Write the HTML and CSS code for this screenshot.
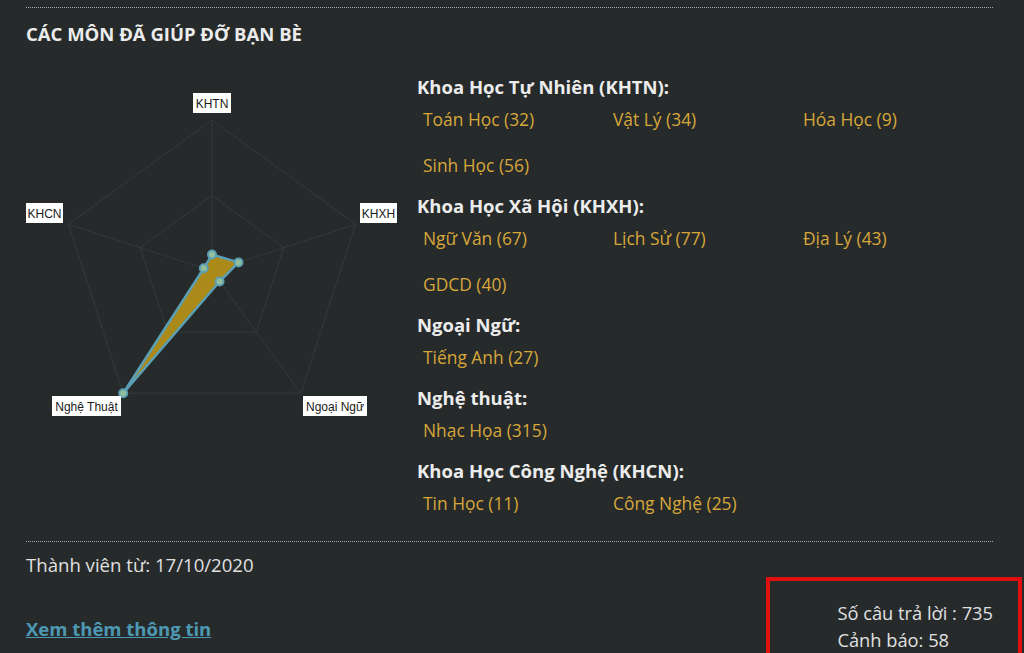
FILE: index.html
```html
<!DOCTYPE html>
<html>
<head lang="vi">
    <meta charset="UTF-8">
    <title>Các môn đã giúp đỡ bạn bè</title>
    <link rel="stylesheet" href="styles.css">
</head>
<body>
<div id="container">
    <h2 class="title">CÁC MÔN ĐÃ GIÚP ĐỠ BẠN BÈ</h2>
    <div class="subjects">
        <div class="chart">
            <svg width="372" height="360" viewBox="0 0 372 360">
                <g class="grid">
                    <polygon points="186,60 329.6,164.3 274.8,333.2 97.2,333.2 42.4,164.3"/>
                    <polygon points="186,135.5 257.8,187.7 230.4,272.1 141.6,272.1 114.2,187.7"/>
                    <line x1="186" y1="211" x2="186" y2="60"/>
                    <line x1="186" y1="211" x2="329.6" y2="164.3"/>
                    <line x1="186" y1="211" x2="274.8" y2="333.2"/>
                    <line x1="186" y1="211" x2="97.2" y2="333.2"/>
                    <line x1="186" y1="211" x2="42.4" y2="164.3"/>
                </g>
                <polygon class="area" points="186,194.5 212.5,202.4 193.6,221.5 97.2,333.2 177.8,208.3"/>
                <g class="dots">
                    <circle cx="186" cy="194.5" r="4"/>
                    <circle cx="212.5" cy="202.4" r="4"/>
                    <circle cx="193.6" cy="221.5" r="4"/>
                    <circle cx="97.2" cy="333.2" r="4"/>
                    <circle cx="177.8" cy="208.3" r="4"/>
                </g>
                <g class="labels">
                    <rect x="167" y="33" width="38" height="20"/>
                    <text x="186" y="47.5">KHTN</text>
                    <rect x="334" y="143" width="37" height="20"/>
                    <text x="352.5" y="157.5">KHXH</text>
                    <rect x="277" y="336" width="64" height="20"/>
                    <text x="309" y="350.5">Ngoại Ngữ</text>
                    <rect x="26" y="336" width="69" height="20"/>
                    <text x="60.5" y="350.5">Nghệ Thuật</text>
                    <rect x="0" y="143" width="37" height="20"/>
                    <text x="18.5" y="157.5">KHCN</text>
                </g>
            </svg>
        </div>
        <div class="groups">
            <h3>Khoa Học Tự Nhiên (KHTN):</h3>
            <ul>
                <li>Toán Học (32)</li>
                <li>Vật Lý (34)</li>
                <li>Hóa Học (9)</li>
                <li>Sinh Học (56)</li>
            </ul>
            <h3>Khoa Học Xã Hội (KHXH):</h3>
            <ul>
                <li>Ngữ Văn (67)</li>
                <li>Lịch Sử (77)</li>
                <li>Địa Lý (43)</li>
                <li>GDCD (40)</li>
            </ul>
            <h3>Ngoại Ngữ:</h3>
            <ul>
                <li>Tiếng Anh (27)</li>
            </ul>
            <h3>Nghệ thuật:</h3>
            <ul>
                <li>Nhạc Họa (315)</li>
            </ul>
            <h3>Khoa Học Công Nghệ (KHCN):</h3>
            <ul>
                <li>Tin Học (11)</li>
                <li>Công Nghệ (25)</li>
            </ul>
        </div>
    </div>
    <div class="member">Thành viên từ: 17/10/2020</div>
    <div class="footer">
        <a href="#" class="more">Xem thêm thông tin</a>
        <div class="stats">
            <p>Số câu trả lời : 735</p>
            <p>Cảnh báo: 58</p>
        </div>
    </div>
    <div class="mark"></div>
</div>
</body>
</html>
```

FILE: styles.css
```css
* {
    padding: 0;
    margin: 0;
}

ul, ol {
    list-style: none;
}

body {
    background: #262a2b;
    color: #e4e4e4;
    font-family: "Open Sans", "Noto Sans", sans-serif;
    overflow: hidden;
}

#container {
    position: relative;
    height: 653px;
    padding: 7px 31px 0 26px;
}

.title {
    border-top: 1px dotted #a8a8a8;
    padding-top: 14px;
    font-size: 18.5px;
    line-height: 24px;
    font-weight: 700;
    color: #ececec;
}

.subjects {
    display: flex;
    margin-top: 14px;
    border-bottom: 1px dotted #a8a8a8;
    padding-bottom: 10px;
}

.chart {
    width: 391px;
    flex: none;
}

.chart svg {
    display: block;
}

.grid polygon, .grid line {
    fill: none;
    stroke: #33393a;
    stroke-width: 1;
}

.area {
    fill: #ab8a19;
    stroke: #5b9fb4;
    stroke-width: 2.5;
    stroke-linejoin: round;
}

.dots circle {
    fill: #93bf9c;
    stroke: #5b9fb4;
    stroke-width: 2;
}

.labels rect {
    fill: #ffffff;
}

.labels text {
    font-family: "Liberation Sans", Arial, sans-serif;
    font-size: 12px;
    fill: #1a1a1a;
    text-anchor: middle;
}

.groups {
    flex: 1;
    padding-top: 14px;
}

.groups h3 {
    font-size: 18.5px;
    line-height: 26px;
    font-weight: 700;
    color: #ececec;
    margin-bottom: 6px;
}

.groups ul {
    display: flex;
    flex-wrap: wrap;
    row-gap: 20px;
    margin-bottom: 15px;
    padding-left: 6px;
}

.groups li {
    width: 190px;
    font-size: 17.4px;
    line-height: 26px;
    color: #d6a73a;
}

.member {
    margin-top: 11px;
    font-size: 18.6px;
    line-height: 24px;
    color: #e0e0e0;
}

.footer {
    display: flex;
    justify-content: space-between;
    align-items: center;
    margin-top: 22px;
}

.more {
    font-size: 18.5px;
    font-weight: 700;
    color: #4d98b3;
    text-decoration: underline;
    margin-top: 4px;
}

.stats p {
    font-size: 18.3px;
    line-height: 27px;
    color: #e0e0e0;
}

.mark {
    position: absolute;
    left: 766px;
    top: 577px;
    width: 248px;
    height: 90px;
    border: 4px solid #e01010;
}
```
